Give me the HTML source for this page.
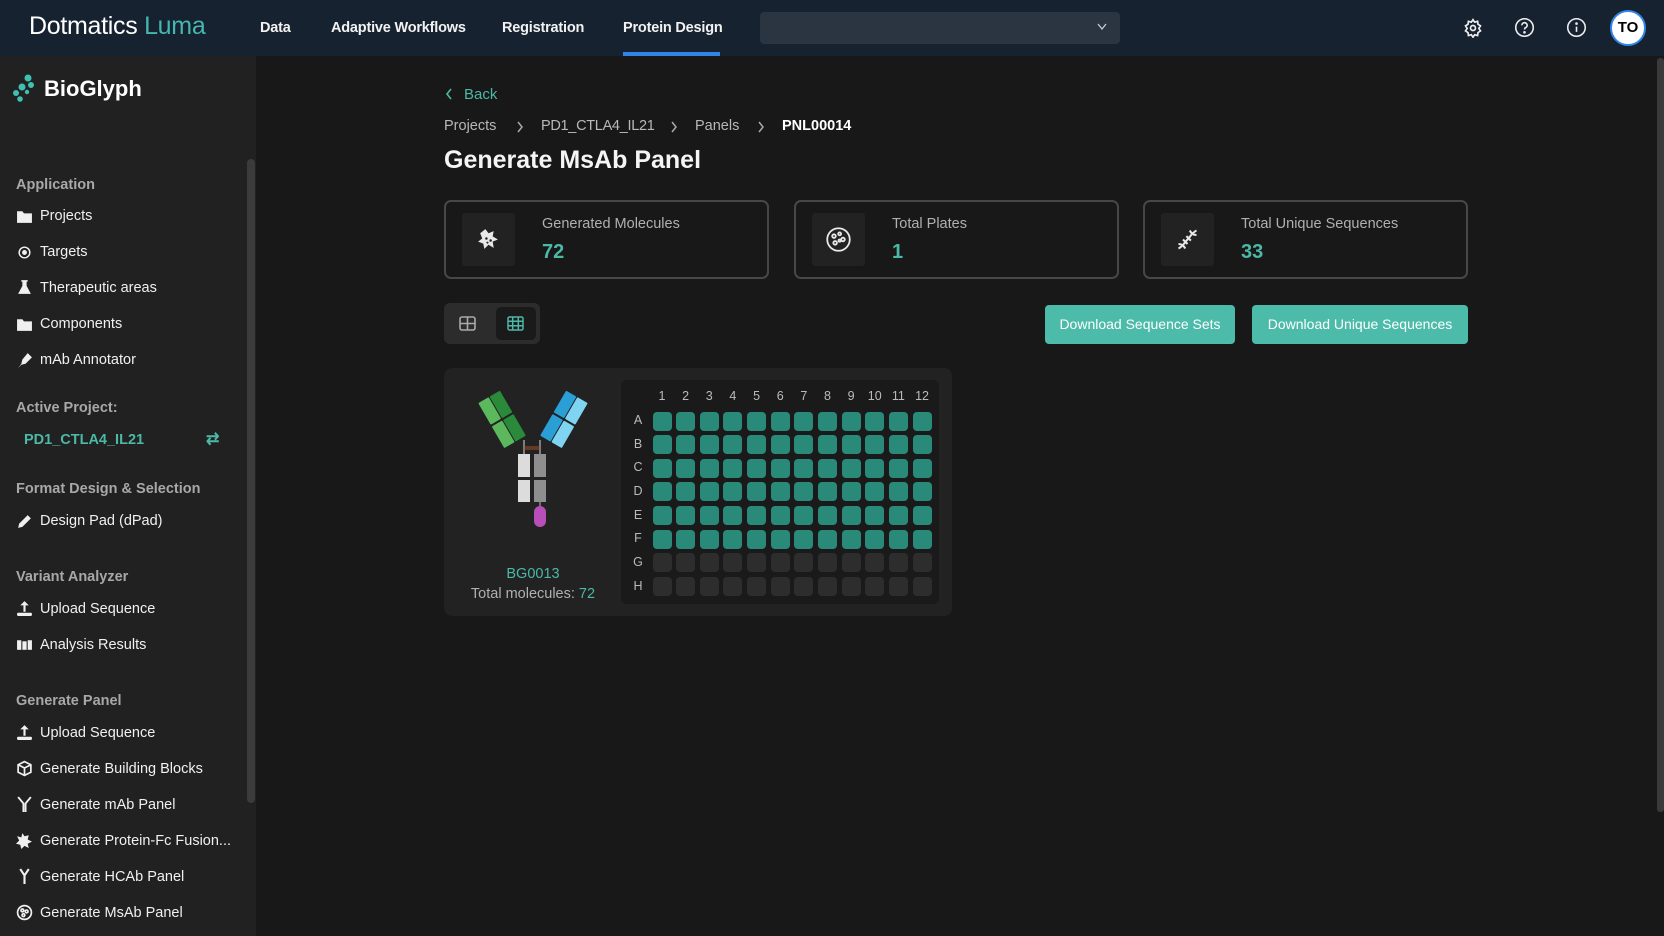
<!DOCTYPE html>
<html><head><meta charset="utf-8"><style>
*{margin:0;padding:0;box-sizing:border-box}
body{width:1664px;height:936px;overflow:hidden;background:#181818;font-family:"Liberation Sans",sans-serif;color:#e8e8e8;position:relative}
.a{position:absolute;white-space:nowrap}
.hdr{left:0;top:0;width:1664px;height:56px;background:#172231}
.nav{font-size:14.5px;font-weight:bold;color:#f2f2f2;top:20px;letter-spacing:-0.2px}
.side{left:0;top:56px;width:256px;height:880px;background:#212121}
.sh{font-size:14.5px;color:#a8a8a8;left:16px;font-weight:bold}
.it{font-size:14.5px;color:#f0f0f0;left:40px}
.ic{left:16px;width:17px;height:17px}
.card{border:2px solid #474747;border-radius:7px;height:79px;width:325px;top:200px}
.ibox{position:absolute;left:16px;top:11px;width:53px;height:53px;background:#222;border-radius:3px}
.lbl{position:absolute;left:96px;top:14px;font-size:14.5px;color:#b0b0b0}
.val{position:absolute;left:96px;top:39px;font-size:20px;font-weight:bold;color:#4cb8a6}
.btn{background:#4cbbaa;color:#fff;font-size:14px;border-radius:4px;top:305px;height:39px;line-height:39px;text-align:center}
.bc{font-size:14.5px;color:#b8b8b8;top:118px}
.chev{top:120px}
</style></head><body>
<div class="a hdr"></div>
<div class="a" style="left:29px;top:12px;font-size:25px;color:#fff;letter-spacing:-0.3px">Dotmatics<span style="color:#45b7b0;font-weight:300"> Luma</span></div>
<div class="a nav" style="left:260px">Data</div>
<div class="a nav" style="left:331px">Adaptive Workflows</div>
<div class="a nav" style="left:502px">Registration</div>
<div class="a nav" style="left:623px">Protein Design</div>
<div class="a" style="left:623px;top:52px;width:97px;height:4px;background:#2f86e6"></div>
<div class="a" style="left:760px;top:12px;width:360px;height:32px;background:#2b3542;border-radius:4px"></div>
<svg class="a" style="left:1096px;top:22px" width="12" height="10" viewBox="0 0 12 10"><path d="M2 2 L6 7 L10 2" stroke="#ccc" stroke-width="1.3" fill="none"/></svg>
<svg class="a" style="left:1463px;top:18px" width="20" height="20" viewBox="0 0 24 24" fill="none" stroke="#eee" stroke-width="2"><circle cx="12" cy="12" r="3"/><path d="M12 2l2 3 3.5-1 .5 3.5 3 2-2 3 2 3-3 2-.5 3.5-3.5-1-2 3-2-3-3.5 1-.5-3.5-3-2 2-3-2-3 3-2 .5-3.5 3.5 1z"/></svg>
<svg class="a" style="left:1514px;top:17px" width="21" height="21" viewBox="0 0 24 24" fill="none" stroke="#eee" stroke-width="1.8"><circle cx="12" cy="12" r="10"/><path d="M9 9.5a3 3 0 1 1 4 2.8c-.8.4-1 1-1 2"/><circle cx="12" cy="17.5" r=".6" fill="#eee"/></svg>
<svg class="a" style="left:1566px;top:17px" width="21" height="21" viewBox="0 0 24 24" fill="none" stroke="#eee" stroke-width="1.8"><circle cx="12" cy="12" r="10"/><path d="M12 11v6"/><circle cx="12" cy="7.5" r=".6" fill="#eee"/></svg>
<div class="a" style="left:1610px;top:10px;width:36px;height:36px;border-radius:50%;background:#fff;border:2px solid #2f86e6;color:#000;font-weight:bold;font-size:15px;text-align:center;line-height:32px">TO</div>

<div class="a side"></div>
<svg class="a" style="left:11px;top:74px" width="24" height="28" viewBox="0 0 24 28" fill="#3fc0b0"><circle cx="17" cy="4" r="3.5"/><circle cx="20" cy="11" r="3"/><circle cx="11" cy="13" r="3.5"/><circle cx="5" cy="19" r="3"/><circle cx="9" cy="25" r="2.8"/><circle cx="16" cy="18" r="2.2"/></svg>
<div class="a" style="left:44px;top:76px;font-size:22px;font-weight:bold;color:#fff">BioGlyph</div>
<div class="a" style="left:247px;top:159px;width:8px;height:644px;background:#3b3b3b;border-radius:4px"></div>

<div class="a sh" style="top:177px">Application</div>
<svg class="a ic" style="top:208px" viewBox="0 0 16 16" fill="#f0f0f0"><path d="M1 3h5l1.5 2H15v9H1z"/></svg>
<div class="a it" style="top:208px">Projects</div>
<svg class="a ic" style="top:244px" viewBox="0 0 16 16" fill="none" stroke="#f0f0f0" stroke-width="1.4"><circle cx="8" cy="8" r="5"/><circle cx="8" cy="8" r="1.6" fill="#f0f0f0"/></svg>
<div class="a it" style="top:244px">Targets</div>
<svg class="a ic" style="top:279px" viewBox="0 0 16 16" fill="#f0f0f0"><path d="M5 1h6v1.5h-1v4l4 7.5H2l4-7.5v-4H5z"/></svg>
<div class="a it" style="top:280px">Therapeutic areas</div>
<svg class="a ic" style="top:316px" viewBox="0 0 16 16" fill="#f0f0f0"><path d="M1 3h5l1.5 2H15v9H1z"/></svg>
<div class="a it" style="top:316px">Components</div>
<svg class="a ic" style="top:352px" viewBox="0 0 16 16" fill="#f0f0f0"><path d="M11 1l4 4-6 6-4 1-3 3 3-4 1-4z"/></svg>
<div class="a it" style="top:352px">mAb Annotator</div>

<div class="a sh" style="top:400px">Active Project:</div>
<div class="a" style="left:24px;top:432px;font-size:14.5px;color:#4cb8a6;font-weight:bold">PD1_CTLA4_IL21</div>
<div class="a" style="left:206px;top:429px;font-size:16px;color:#4cb8a6;font-weight:bold">⇄</div>

<div class="a sh" style="top:481px">Format Design &amp; Selection</div>
<svg class="a ic" style="top:513px" viewBox="0 0 16 16" fill="#f0f0f0"><path d="M11 2l3 3-8 8-4 1 1-4z"/></svg>
<div class="a it" style="top:513px">Design Pad (dPad)</div>

<div class="a sh" style="top:569px">Variant Analyzer</div>
<svg class="a ic" style="top:600px" viewBox="0 0 16 16" fill="#f0f0f0"><path d="M8 1l4 4H9v6H7V5H4z"/><rect x="1" y="12" width="14" height="3" rx="1"/></svg>
<div class="a it" style="top:601px">Upload Sequence</div>
<svg class="a ic" style="top:636px" viewBox="0 0 16 16" fill="#f0f0f0"><rect x="1" y="4" width="4" height="9"/><rect x="6" y="5" width="4" height="8"/><rect x="11" y="4" width="4" height="9"/></svg>
<div class="a it" style="top:637px">Analysis Results</div>

<div class="a sh" style="top:693px">Generate Panel</div>
<svg class="a ic" style="top:724px" viewBox="0 0 16 16" fill="#f0f0f0"><path d="M8 1l4 4H9v6H7V5H4z"/><rect x="1" y="12" width="14" height="3" rx="1"/></svg>
<div class="a it" style="top:725px">Upload Sequence</div>
<svg class="a ic" style="top:760px" viewBox="0 0 16 16" fill="none" stroke="#f0f0f0" stroke-width="1.6"><path d="M8 1.5l6 3v7l-6 3-6-3v-7z M2 4.5l6 3 6-3 M8 7.5v7"/></svg>
<div class="a it" style="top:761px">Generate Building Blocks</div>
<svg class="a ic" style="top:796px" viewBox="0 0 16 16" fill="none" stroke="#f0f0f0" stroke-width="1.8"><path d="M2 1l5 6v8M14 1l-5 6v8"/></svg>
<div class="a it" style="top:797px">Generate mAb Panel</div>
<svg class="a ic" style="top:832px" viewBox="0 0 16 16" fill="#f0f0f0"><path d="M6 1l2 3 4-1-1 4 4 2-4 2 1 4-4-2-3 3-1-4-4-1 3-3-2-4 4 1z"/></svg>
<div class="a it" style="top:833px">Generate Protein-Fc Fusion...</div>
<svg class="a ic" style="top:868px" viewBox="0 0 16 16" fill="none" stroke="#f0f0f0" stroke-width="2"><path d="M4 1l4 6 4-6M8 7v8"/></svg>
<div class="a it" style="top:869px">Generate HCAb Panel</div>
<svg class="a ic" style="top:904px" viewBox="0 0 16 16" fill="none" stroke="#f0f0f0" stroke-width="1.6"><circle cx="8" cy="8" r="6.5"/><circle cx="6" cy="6" r="1.3"/><circle cx="10" cy="7" r="1.3"/><circle cx="7" cy="10.5" r="1.3"/></svg>
<div class="a it" style="top:905px">Generate MsAb Panel</div>

<div class="a" style="left:1657px;top:58px;width:7px;height:754px;background:#3a3a3a;border-radius:3px"></div>

<svg class="a" style="left:444px;top:87px" width="10" height="14" viewBox="0 0 10 14"><path d="M7 2L3 7l4 5" stroke="#4cb8a6" stroke-width="1.6" fill="none"/></svg>
<div class="a" style="left:464px;top:86px;font-size:15px;color:#4cb8a6">Back</div>
<div class="a bc" style="left:444px">Projects</div>
<svg class="a chev" style="left:515px" width="10" height="14" viewBox="0 0 10 14"><path d="M3 2l4 5-4 5" stroke="#aaa" stroke-width="1.5" fill="none"/></svg>
<div class="a bc" style="left:541px;letter-spacing:-0.3px">PD1_CTLA4_IL21</div>
<svg class="a chev" style="left:669px" width="10" height="14" viewBox="0 0 10 14"><path d="M3 2l4 5-4 5" stroke="#aaa" stroke-width="1.5" fill="none"/></svg>
<div class="a bc" style="left:695px">Panels</div>
<svg class="a chev" style="left:756px" width="10" height="14" viewBox="0 0 10 14"><path d="M3 2l4 5-4 5" stroke="#aaa" stroke-width="1.5" fill="none"/></svg>
<div class="a bc" style="left:782px;color:#fff;font-weight:bold">PNL00014</div>
<div class="a" style="left:444px;top:146px;font-size:25px;font-weight:bold;color:#f5f5f5">Generate MsAb Panel</div>

<div class="a card" style="left:444px"><div class="ibox"><svg style="margin:14px" width="25" height="25" viewBox="0 0 24 24"><path d="M9 2l3 4 5-2-1 5 5 3-5 2 1 6-5-3-4 4-1-5-5-2 4-3-2-5z" fill="#e8e8e8"/><circle cx="10" cy="11" r="1.2" fill="#222"/><circle cx="14" cy="13" r="1.2" fill="#222"/><circle cx="11" cy="15" r="1" fill="#222"/></svg></div><div class="lbl">Generated Molecules</div><div class="val">72</div></div>
<div class="a card" style="left:794px"><div class="ibox"><svg style="margin:13px" width="27" height="27" viewBox="0 0 24 24" fill="none" stroke="#e8e8e8" stroke-width="1.6"><circle cx="12" cy="12" r="10"/><circle cx="8" cy="9" r="1.6"/><circle cx="13" cy="7" r="1.3"/><circle cx="16" cy="12" r="1.6"/><circle cx="9" cy="15" r="1.6"/><circle cx="13" cy="13" r="1"/></svg></div><div class="lbl">Total Plates</div><div class="val">1</div></div>
<div class="a card" style="left:1143px"><div class="ibox"><svg style="margin:13px" width="27" height="27" viewBox="0 0 24 24" fill="none" stroke="#e8e8e8" stroke-width="1.8"><path d="M4 20c4-2 6-6 8-8s4-6 8-8M4 16c3 0 5 2 6 4M14 4c1 2 3 4 6 4M8 12l4 4M11 9l4 4"/></svg></div><div class="lbl">Total Unique Sequences</div><div class="val">33</div></div>

<div class="a" style="left:444px;top:303px;width:96px;height:41px;background:#2c2c2c;border-radius:6px"></div>
<div class="a" style="left:496px;top:307px;width:40px;height:33px;background:#1a1a1a;border-radius:5px"></div>
<svg class="a" style="left:459px;top:316px" width="17" height="15" viewBox="0 0 17 15" fill="none" stroke="#aaa" stroke-width="1.6"><rect x="1" y="1" width="15" height="13" rx="2"/><path d="M1 7.5h15M8.5 1v13"/></svg>
<svg class="a" style="left:507px;top:316px" width="17" height="15" viewBox="0 0 17 15" fill="none" stroke="#4cb8a6" stroke-width="1.5"><rect x="1" y="1" width="15" height="13" rx="1.5"/><path d="M1 5.3h15M1 9.7h15M5.7 1v13M11.3 1v13"/></svg>

<div class="a btn" style="left:1045px;width:190px">Download Sequence Sets</div>
<div class="a btn" style="left:1252px;width:216px">Download Unique Sequences</div>

<div class="a" style="left:444px;top:368px;width:508px;height:248px;background:#222;border-radius:8px"></div>
<div class="a" style="left:621px;top:380px;width:318px;height:224px;background:#1a1a1a;border-radius:6px"></div>
<svg class="a" style="left:470px;top:385px" width="130" height="150" viewBox="470 385 130 150">
 <g transform="rotate(-30 503 420)">
  <rect x="490" y="393" width="12" height="25" rx="1" fill="#5cb85c"/><rect x="503" y="393" width="12" height="25" rx="1" fill="#2a8a3a"/>
  <rect x="490" y="420" width="12" height="25" rx="1" fill="#5cb85c"/><rect x="503" y="420" width="12" height="25" rx="1" fill="#2a8a3a"/>
 </g>
 <g transform="rotate(30 563 420)">
  <rect x="551" y="393" width="12" height="25" rx="1" fill="#2a9fd6"/><rect x="564" y="393" width="12" height="25" rx="1" fill="#7fd4f2"/>
  <rect x="551" y="420" width="12" height="25" rx="1" fill="#2a9fd6"/><rect x="564" y="420" width="12" height="25" rx="1" fill="#7fd4f2"/>
 </g>
 <path d="M524 440v14M540 440v14" stroke="#bbb" stroke-width="1.2"/>
 <path d="M524 447h16M524 449h16" stroke="#a0522d" stroke-width="1"/>
 <rect x="518" y="454" width="12" height="23" fill="#dcdcdc"/><rect x="534" y="454" width="12" height="23" fill="#8e8e8e"/>
 <rect x="518" y="480" width="12" height="22" fill="#dcdcdc"/><rect x="534" y="480" width="12" height="22" fill="#8e8e8e"/>
 <path d="M540 502v4" stroke="#bbb"/>
 <rect x="534" y="506" width="12" height="21" rx="6" fill="#b84fb8"/>
</svg>
<div class="a" style="left:533px;top:566px;transform:translateX(-50%);font-size:14.5px;color:#4cb8a6">BG0013</div>
<div class="a" style="left:533px;top:586px;transform:translateX(-50%);font-size:14.5px;color:#b0b0b0">Total molecules: <span style="color:#4cb8a6">72</span></div>

<div id="plate"></div>
<script>
(function(){var h='',r='ABCDEFGH';for(var c=0;c<12;c++){var x=662+23.64*c;h+='<div class="a" style="left:'+(x-10)+'px;top:389px;width:20px;text-align:center;font-size:12.5px;color:#bbb">'+(c+1)+'</div>';}
for(var j=0;j<8;j++){var y=421+23.66*j;h+='<div class="a" style="left:632px;top:'+(y-8)+'px;width:12px;text-align:center;font-size:12.5px;color:#bbb">'+r[j]+'</div>';
for(var c=0;c<12;c++){var x=662+23.64*c;h+='<div class="a" style="left:'+(x-9.5)+'px;top:'+(y-9.5)+'px;width:19px;height:19px;border-radius:4px;background:'+(j<6?'#2a8a7a':'#2d2d2d')+'"></div>';}}
document.getElementById('plate').innerHTML=h;})();
</script>
</body></html>
